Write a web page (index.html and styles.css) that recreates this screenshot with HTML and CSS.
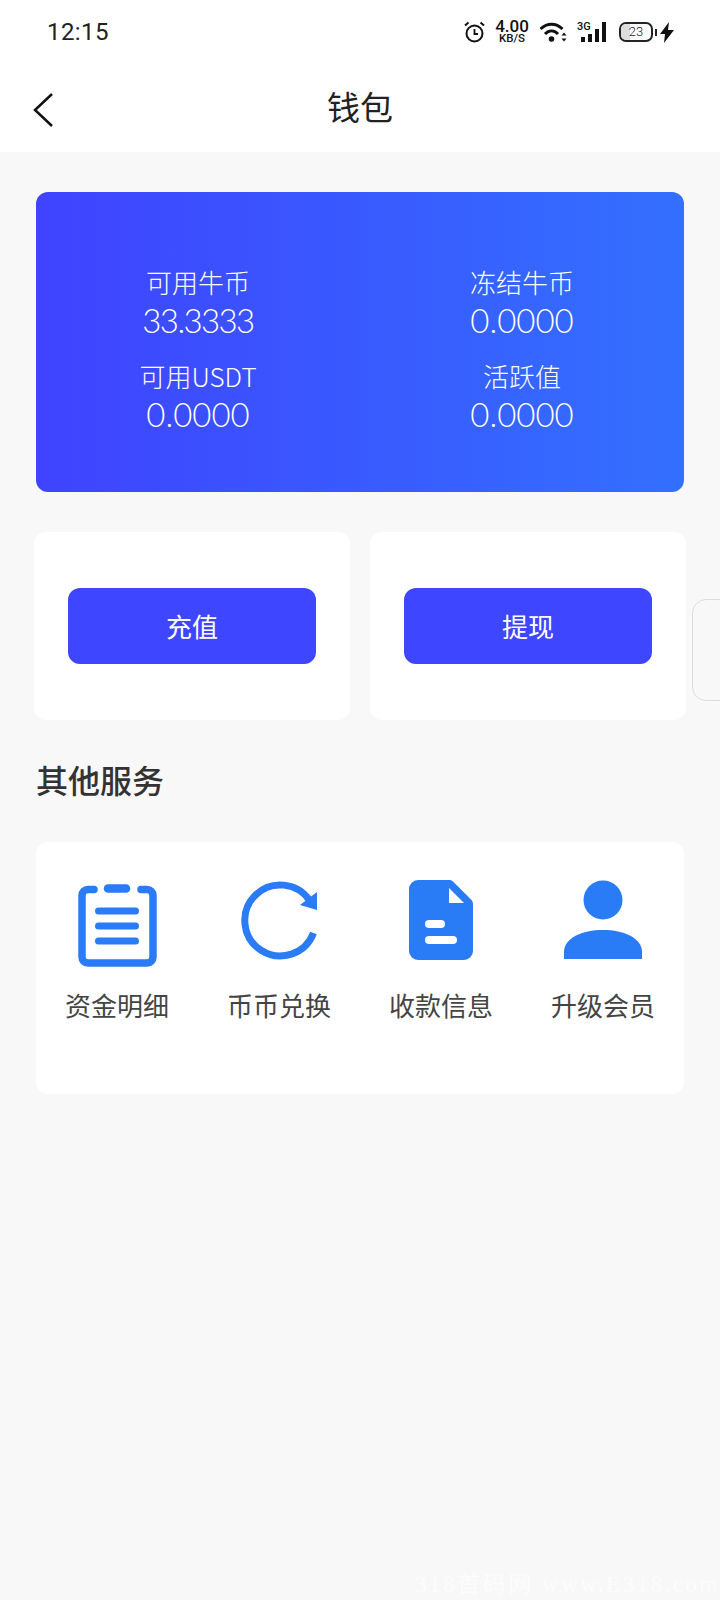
FILE: index.html
```html
<!DOCTYPE html>
<html lang="zh-CN">
<head>
    <meta charset="UTF-8">
    <meta name="viewport" content="width=device-width, initial-scale=1.0">
    <title>钱包</title>
    <link rel="stylesheet" href="styles.css">
</head>
<body>
    <div class="page">
        <div class="header">
            <div class="status-bar">
                <span class="time">12:15</span>
                <div class="status-icons">
                    <svg class="ic-alarm" width="21" height="22" viewBox="0 0 21 22" fill="none" stroke="#111">
                        <circle cx="10.5" cy="12.5" r="8" stroke-width="2"/>
                        <path d="M10.5 8v5h3.5" stroke-width="1.8"/>
                        <path d="M1 4.500 4.500 1.500M20 4.500 16.500 1.500" stroke-width="2"/>
                    </svg>
                    <div class="speed">
                        <span class="speed-num">4.00</span>
                        <span class="speed-unit">KB/S</span>
                    </div>
                    <svg class="ic-wifi" width="27" height="20" viewBox="0 0 27 20" fill="none" stroke="#111" stroke-width="3">
                        <path d="M.5 7C7 .5 16 .5 22.500 7"/>
                        <path d="M5 12C9 8 14 8 18 12"/>
                        <circle cx="11.500" cy="17" r="2.800" fill="#111" stroke="none"/>
                        <path d="M24 10.500l-2.500 3h5zM24 19.500l-2.500-3h5z" fill="#111" stroke="none"/>
                    </svg>
                    <div class="signal">
                        <span class="net">3G</span>
                        <span class="bar bar-1"></span>
                        <span class="bar bar-2"></span>
                        <span class="bar bar-3"></span>
                        <span class="bar bar-4"></span>
                    </div>
                    <div class="battery">
                        <div class="battery-body"><span class="battery-level"></span><span class="battery-num">23</span></div>
                        <span class="battery-nub"></span>
                    </div>
                    <svg class="ic-bolt" width="14" height="21" viewBox="0 0 14 21">
                        <path d="M9 0 0 12h5l-1 9 10-13H8z" fill="#111"/>
                    </svg>
                </div>
            </div>
            <div class="nav">
                <svg class="back" width="20" height="34" viewBox="0 0 20 34" fill="none" stroke="#111" stroke-width="2.500">
                    <path d="M19 1 2 17l17 16"/>
                </svg>
                <h1 class="nav-title">钱包</h1>
            </div>
        </div>

        <div class="content">
            <div class="hero">
                <div class="stat">
                    <div class="stat-label">可用牛币</div>
                    <div class="stat-value stat-value-tight">33.3333</div>
                </div>
                <div class="stat">
                    <div class="stat-label">冻结牛币</div>
                    <div class="stat-value">0.0000</div>
                </div>
                <div class="stat">
                    <div class="stat-label">可用USDT</div>
                    <div class="stat-value">0.0000</div>
                </div>
                <div class="stat">
                    <div class="stat-label">活跃值</div>
                    <div class="stat-value">0.0000</div>
                </div>
            </div>

            <div class="actions">
                <div class="action-card"><a class="action-btn">充值</a></div>
                <div class="action-card"><a class="action-btn">提现</a></div>
            </div>

            <h2 class="section-title">其他服务</h2>

            <div class="services">
                <div class="service">
                    <svg class="service-icon" width="90" height="90" viewBox="0 0 90 90" fill="none" stroke="#2a7bf6" stroke-linecap="round">
                        <path d="M22 11.500H16a6 6 0 0 0-6 6V79a6 6 0 0 0 6 6H75a6 6 0 0 0 6-6V17.500a6 6 0 0 0-6-6H69" stroke-width="7.500"/>
                        <path d="M36 10.500H54" stroke-width="8.500"/>
                        <path d="M26.500 33H63.500M26.500 48H63.500M26.500 63H63.500" stroke-width="7"/>
                    </svg>
                    <span class="service-name">资金明细</span>
                </div>
                <div class="service">
                    <svg class="service-icon" width="90" height="90" viewBox="0 0 90 90" fill="none">
                        <path d="M79.500 55A35.500 35.500 0 1 1 76 23" stroke="#2a7bf6" stroke-width="7"/>
                        <path d="M83 14V32L66 27z" fill="#2a7bf6"/>
                    </svg>
                    <span class="service-name">币币兑换</span>
                </div>
                <div class="service">
                    <svg class="service-icon" width="90" height="90" viewBox="0 0 90 90">
                        <path d="M22 2H54a4 4 0 0 1 3 1.500L75.500 22a6 6 0 0 1 1.500 4V73a9 9 0 0 1-9 9H22a9 9 0 0 1-9-9V11a9 9 0 0 1 9-9z" fill="#2a7bf6"/>
                        <path d="M53 10V25H68z" fill="#fff"/>
                        <rect x="29" y="42" width="20" height="8" rx="4" fill="#fff"/>
                        <rect x="29" y="58" width="32" height="8" rx="4" fill="#fff"/>
                    </svg>
                    <span class="service-name">收款信息</span>
                </div>
                <div class="service">
                    <svg class="service-icon" width="90" height="90" viewBox="0 0 90 90" fill="#2a7bf6">
                        <circle cx="45" cy="22" r="19.500"/>
                        <path d="M6 81V74C6 60 24 52 45 52S84 60 84 74V81Z"/>
                    </svg>
                    <span class="service-name">升级会员</span>
                </div>
            </div>
        </div>

        <div class="side-tab"></div>
        <div class="watermark">318首码网 www.E318.com</div>
    </div>
</body>
</html>
```

FILE: styles.css
```css
* {
  box-sizing: border-box;
}

body {
  margin: 0;
  font-family: "Noto Sans CJK SC", "Noto Sans", sans-serif;
  background-color: #f8f8f8;
}

.page {
  position: relative;
  height: 1600px;
  overflow: hidden;
}

.header {
  height: 152px;
  background-color: #fff;
}

.status-bar {
  display: flex;
  justify-content: space-between;
  align-items: center;
  height: 64px;
  padding: 0 46px 0 47px;
}

.time {
  font-family: Roboto, sans-serif;
  font-size: 24px;
  letter-spacing: 0.4px;
  color: #222;
}

.status-icons {
  display: flex;
  align-items: center;
}

.ic-alarm {
  margin-right: 10px;
}

.speed {
  display: flex;
  flex-direction: column;
  align-items: center;
  width: 34px;
  margin-right: 11px;
  font-family: Roboto, sans-serif;
  font-weight: 500;
  color: #111;
}

.speed-num {
  font-size: 17px;
  line-height: 13px;
}

.speed-unit {
  font-size: 11.5px;
  line-height: 11px;
}

.signal {
  position: relative;
  display: flex;
  align-items: flex-end;
  gap: 3px;
  width: 30px;
  height: 20px;
  margin: 0 12px 0 10px;
  padding-left: 4px;
}

.net {
  position: absolute;
  top: -1px;
  left: 0;
  font-family: Roboto, sans-serif;
  font-size: 11px;
  font-weight: 500;
  line-height: 11px;
  color: #111;
}

.bar {
  width: 4px;
  background-color: #111;
}

.bar-1 {
  height: 5px;
}

.bar-2 {
  height: 8px;
}

.bar-3 {
  height: 13px;
}

.bar-4 {
  height: 20px;
}

.battery {
  display: flex;
  align-items: center;
  margin-right: 3px;
}

.battery-body {
  position: relative;
  width: 34px;
  height: 20px;
  border: 2px solid #222;
  border-radius: 7px;
  overflow: hidden;
}

.battery-level {
  position: absolute;
  top: 0;
  bottom: 0;
  left: 0;
  width: 30%;
  background-color: #ddd;
}

.battery-num {
  position: absolute;
  top: 0;
  left: 0;
  width: 100%;
  font-family: Roboto, sans-serif;
  font-size: 13px;
  font-weight: 300;
  line-height: 16px;
  text-align: center;
  color: #222;
}

.battery-nub {
  width: 2px;
  height: 7px;
  margin-left: 2px;
  background-color: #222;
}

.nav {
  position: relative;
  display: flex;
  justify-content: center;
  align-items: center;
  height: 88px;
  padding-bottom: 4px;
}

.back {
  position: absolute;
  top: 29px;
  left: 33px;
}

.nav-title {
  margin: 0;
  font-size: 33px;
  font-weight: 400;
  color: #222;
}

.content {
  display: flex;
  flex-direction: column;
  padding: 40px 34px 0;
}

.hero {
  display: grid;
  grid-template-columns: 1fr 1fr;
  row-gap: 18px;
  height: 300px;
  margin: 0 2px;
  padding-top: 71px;
  border-radius: 12px;
  background: linear-gradient(90deg, #3f43ff, #3370ff);
  align-content: start;
  color: #fff;
}

.stat {
  text-align: center;
}

.stat-label {
  font-size: 26px;
  font-weight: 300;
  line-height: 38px;
}

.stat-value {
  padding-top: 1px;
  font-family: Lato, sans-serif;
  font-size: 33px;
  font-weight: 300;
  line-height: 37px;
}

/* Lato's figures are all one width, the 3 in the reference is narrower */
.stat-value-tight {
  letter-spacing: -1.6px;
}

.actions {
  display: flex;
  gap: 20px;
  margin-top: 40px;
}

.action-card {
  display: flex;
  justify-content: center;
  align-items: center;
  flex: 1;
  height: 188px;
  border-radius: 12px;
  background-color: #fff;
}

.action-btn {
  display: block;
  width: 248px;
  height: 76px;
  border-radius: 12px;
  background-color: #3f46ff;
  font-size: 26px;
  line-height: 76px;
  text-align: center;
  color: #fff;
}

.section-title {
  margin: 36px 2px 40px;
  font-size: 32px;
  font-weight: 500;
  line-height: 46px;
  color: #333;
}

.services {
  display: grid;
  grid-template-columns: repeat(4, 1fr);
  height: 252px;
  margin: 0 2px;
  padding-top: 36px;
  border-radius: 12px;
  background-color: #fff;
}

.service {
  display: flex;
  flex-direction: column;
  align-items: center;
}

.service-icon {
  display: block;
}

.service-name {
  margin-top: 18px;
  font-size: 26px;
  line-height: 38px;
  color: #444;
}

/* floating handle on the right edge */
.side-tab {
  position: absolute;
  top: 599px;
  right: -14px;
  width: 42px;
  height: 102px;
  border: 1px solid #ddd;
  border-radius: 14px;
  background-color: #f8f8f8;
}

.watermark {
  position: absolute;
  right: 0;
  bottom: 1px;
  font-family: "Liberation Serif", "Noto Sans CJK SC", serif;
  font-size: 23px;
  letter-spacing: 2.500px;
  white-space: nowrap;
  color: rgba(255, 255, 255, 0.7);
}
```
